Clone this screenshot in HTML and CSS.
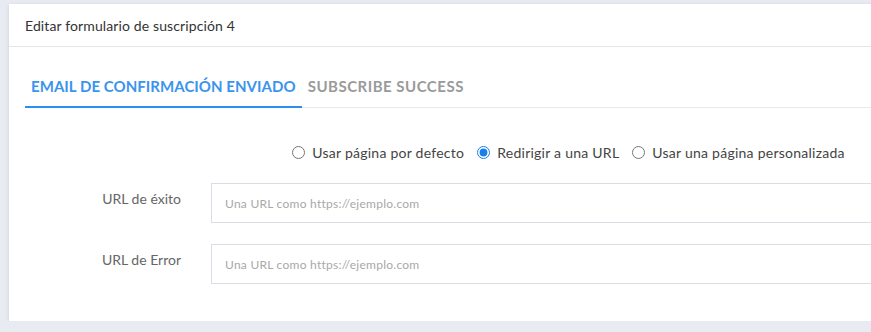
FILE: index.html
```html
<!DOCTYPE html>
<html lang="es">
<head>
    <meta charset="UTF-8">
    <meta name="viewport" content="width=device-width, initial-scale=1.0">
    <title>Editar formulario de suscripción</title>
    <link rel="stylesheet" href="styles.css">
</head>
<body>
    <div class="card">
        <div class="card-header">Editar formulario de suscripción 4</div>

        <div class="card-body">
            <div class="tabs">
                <div class="tab active">EMAIL DE CONFIRMACIÓN ENVIADO</div>
                <div class="tab">SUBSCRIBE SUCCESS</div>
            </div>

            <div class="form">
                <div class="form-row">
                    <div class="form-label"></div>
                    <div class="radio-group">
                        <label class="radio-option">
                            <input type="radio" name="page" value="default">
                            <span>Usar página por defecto</span>
                        </label>
                        <label class="radio-option">
                            <input type="radio" name="page" value="redirect" checked>
                            <span>Redirigir a una URL</span>
                        </label>
                        <label class="radio-option">
                            <input type="radio" name="page" value="custom">
                            <span>Usar una página personalizada</span>
                        </label>
                    </div>
                </div>

                <div class="form-row">
                    <label class="form-label" for="successUrl">URL de éxito</label>
                    <input type="text" id="successUrl" class="form-input" placeholder="Una URL como https://ejemplo.com">
                </div>

                <div class="form-row">
                    <label class="form-label" for="errorUrl">URL de Error</label>
                    <input type="text" id="errorUrl" class="form-input" placeholder="Una URL como https://ejemplo.com">
                </div>
            </div>
        </div>
    </div>
</body>
</html>
```

FILE: styles.css
```css
html {
    overflow: hidden;
}

body {
    font-family: 'Lato', 'Noto Sans', sans-serif;
    background-color: #e8ebf2;
    margin: 0;
    padding: 4px 0 0 9px;
}

.card {
    background: white;
    width: 933px;
    box-shadow: 0 1px 4px rgba(0, 0, 0, 0.12);
}

.card-header {
    height: 42px;
    padding: 0 16px;
    display: flex;
    align-items: center;
    font-size: 14px;
    letter-spacing: 0.12px;
    color: #333;
    border-bottom: 1px solid #e6e6e9;
}

.card-body {
    padding: 18px 16px 37px;
}

.tabs {
    display: flex;
    border-bottom: 1px solid #e8e9ef;
}

.tab {
    height: 41px;
    padding: 0 6px;
    display: flex;
    align-items: center;
    font-size: 15px;
    font-weight: bold;
    letter-spacing: 0.05px;
    color: #9a9a9a;
    border-bottom: 2px solid transparent;
    margin-bottom: -1px;
}

.tab + .tab {
    letter-spacing: 0.5px;
}

.tab.active {
    color: #3a94ee;
    border-bottom-color: #2b8ff0;
}

.form {
    margin-top: 34px;
}

.form-row {
    display: grid;
    grid-template-columns: 156px 1fr;
    column-gap: 30px;
    margin-bottom: 21px;
}

.form-row:last-child {
    margin-bottom: 0;
}

.form-label {
    text-align: right;
    font-size: 14px;
    line-height: 20px;
    padding-top: 6px;
    color: #666;
}

.radio-group {
    display: flex;
    justify-content: center;
    gap: 13px;
    height: 20px;
    align-items: center;
}

.radio-option {
    display: flex;
    align-items: center;
    font-size: 14px;
    letter-spacing: 0.25px;
    color: #444;
}

.radio-option input {
    margin: 0 7px 0 0;
    accent-color: #1a7fe8;
}

.form-input {
    height: 40px;
    box-sizing: border-box;
    border: 1px solid #dcdce6;
    padding: 0 13px;
    font-family: inherit;
    font-size: 12px;
    letter-spacing: 0.25px;
    outline: none;
}

.form-input::placeholder {
    color: #a8a8a8;
}
```
